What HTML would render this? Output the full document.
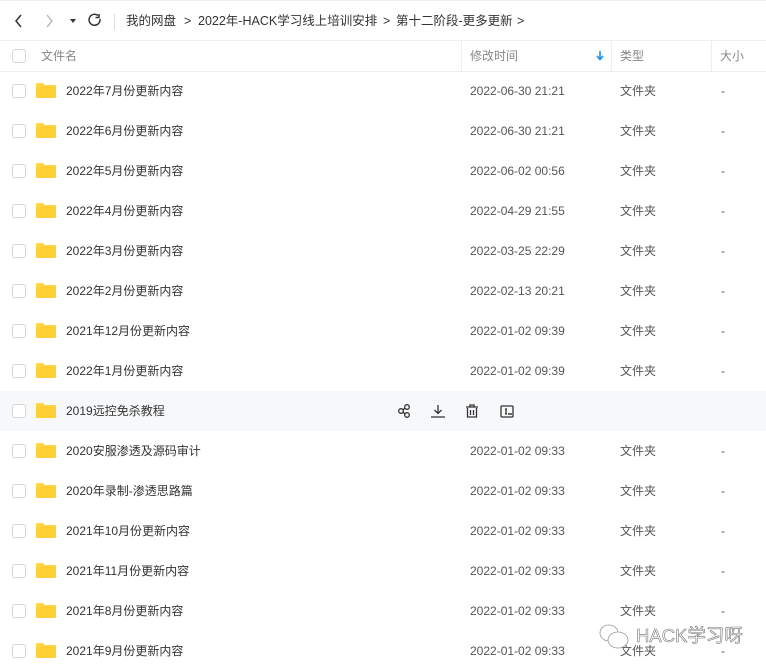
<!DOCTYPE html>
<html><head><meta charset="utf-8"><style>
body{margin:0;width:766px;height:669px;overflow:hidden;background:#fff;font-family:"Liberation Sans","Noto Sans CJK SC",sans-serif;font-size:12px;color:#333;position:relative}
span{line-height:16px;height:16px;display:block;white-space:nowrap}
.top{height:40px;position:relative;border-top:1px solid #eee}
.top span{position:absolute;top:12px;font-size:12.5px;color:#333}
.hdr{position:absolute;top:40px;left:0;width:766px;height:30px;border-bottom:1px solid #eee;border-top:1px solid #f0f0f0;color:#888}
.hdr span{position:absolute;top:7px}
.vd{position:absolute;top:0;width:1px;height:30px;background:#eee}
.cb{position:absolute;left:12px;width:12px;height:12px;border:1px solid #d5d5d5;border-radius:3px;background:#fff}
.row{position:absolute;left:0;width:766px;height:40px}
.row span{position:absolute;top:12px}
.fd{position:absolute;left:36px;top:12px;width:20px;height:15px}
.n{left:66px;color:#333}.t{left:470px;color:#555}.k{left:620px;color:#555}.s{left:721px;color:#555}
.wm{position:absolute;left:636px;top:624px;font-size:18.5px;line-height:24px;color:#fff;-webkit-text-stroke:0.6px #777}
</style></head><body>
<div class="top">
<svg style="position:absolute;left:13px;top:12px" width="90" height="16" viewBox="0 0 90 16" fill="none" stroke-width="1.5">
<path d="M8 2L3 8l5 6" stroke="#333"/><path d="M34 2l5 6-5 6" stroke="#bbb"/>
<path d="M57 6h6l-3 4z" fill="#333" stroke="none"/>
<path d="M87 6a5.5 5.5 0 1 1-2-3.5" stroke="#333"/><path d="M86 1v3.5h-3.5" stroke="#333"/></svg>
<div style="position:absolute;left:114px;top:13px;width:1px;height:16px;background:#ddd"></div>
<span style="left:126px">我的网盘</span><span style="left:184px">&gt;</span>
<span style="left:198px">2022年-HACK学习线上培训安排</span><span style="left:383px">&gt;</span>
<span style="left:396px">第十二阶段-更多更新</span><span style="left:517px">&gt;</span>
</div>
<div class="hdr"><div class="cb" style="top:8px"></div><span style="left:41px">文件名</span>
<div class="vd" style="left:461px"></div><span style="left:470px">修改时间</span>
<svg style="position:absolute;left:596px;top:10px" width="8" height="10"><path d="M4 0v8M1 5l3 3.5 3-3.5" stroke="#1a8fe8" stroke-width="1.6" fill="none"/></svg>
<div class="vd" style="left:611px"></div><span style="left:620px">类型</span>
<div class="vd" style="left:711px"></div><span style="left:720px">大小</span></div>
<div id="rows"></div>
<script>
var d=[["2022年7月份更新内容","2022-06-30 21:21"],["2022年6月份更新内容","2022-06-30 21:21"],["2022年5月份更新内容","2022-06-02 00:56"],["2022年4月份更新内容","2022-04-29 21:55"],["2022年3月份更新内容","2022-03-25 22:29"],["2022年2月份更新内容","2022-02-13 20:21"],["2021年12月份更新内容","2022-01-02 09:39"],["2022年1月份更新内容","2022-01-02 09:39"],["2019远控免杀教程",""],["2020安服渗透及源码审计","2022-01-02 09:33"],["2020年录制-渗透思路篇","2022-01-02 09:33"],["2021年10月份更新内容","2022-01-02 09:33"],["2021年11月份更新内容","2022-01-02 09:33"],["2021年8月份更新内容","2022-01-02 09:33"],["2021年9月份更新内容","2022-01-02 09:33"]];
var h="";d.forEach(function(r,i){var y=71+40*i;var hov=i==8;
h+='<div class="row" style="top:'+y+'px;'+(hov?'background:#f7f8fa':'')+'"><div class="cb" style="top:13px"></div><svg class="fd" viewBox="0 0 20 15"><path d="M0 1.5Q0 0 1.5 0H7l2 2h9.5Q20 2 20 3.5V13.5Q20 15 18.5 15H1.5Q0 15 0 13.5z" fill="#ffd443"/><path d="M0 4h20v9.5Q20 15 18.5 15H1.5Q0 15 0 13.5z" fill="#ffcf33"/></svg><span class="n">'+r[0]+'</span>';
if(hov){h+='<svg style="position:absolute;left:397px;top:12px" width="125" height="16" fill="none" stroke="#333" stroke-width="1.3"><circle cx="4" cy="8" r="2.3"/><circle cx="10" cy="4" r="2.3"/><circle cx="10" cy="12" r="2.3"/><path d="M6 7l2-2M6 9l2 2"/><path d="M41 2v8M37.5 7l3.5 3.5 3.5-3.5M34 14h14"/><path d="M69 4h12M73 4V2h4v2M70.5 5v9h9V5M73.5 7v5M76.5 7v5"/><rect x="104" y="3" width="12" height="11" rx="1"/><path d="M108 6h2M109 6v5M108 11h2" /><circle cx="112" cy="11" r=".4"/><circle cx="114" cy="11" r=".4"/></svg>';}
else h+='<span class="t">'+r[1]+'</span><span class="k">文件夹</span><span class="s">-</span>';
h+='</div>';});
document.getElementById('rows').innerHTML=h;
</script>
<svg style="position:absolute;left:598px;top:623px" width="34" height="28" fill="#fff" stroke="#999" stroke-width="0.8"><ellipse cx="11" cy="10" rx="9" ry="8"/><ellipse cx="20" cy="17" rx="10" ry="8"/></svg>
<div class="wm">HACK学习呀</div>
</body></html>
